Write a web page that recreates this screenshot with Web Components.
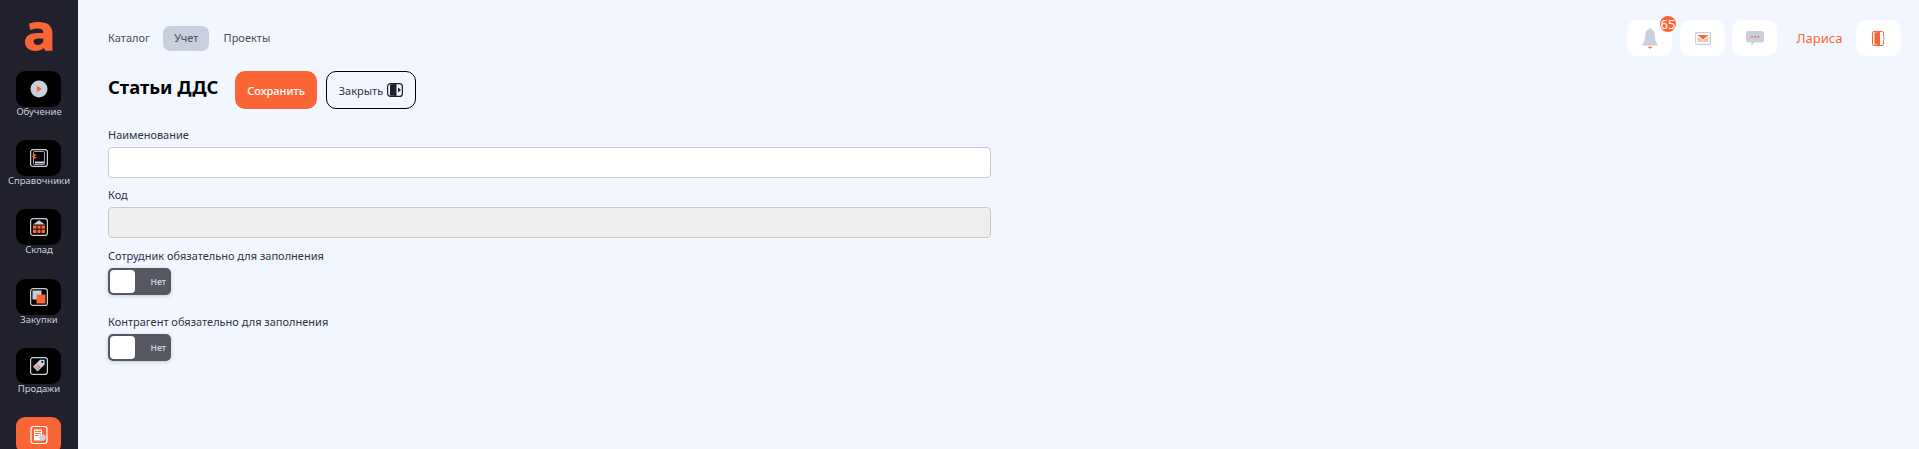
<!DOCTYPE html>
<html lang="ru">
<head>
<meta charset="utf-8">
<title>Статьи ДДС</title>
<style>
  html, body { margin: 0; height: 100%; overflow: hidden; }
  body { font-family: "Noto Sans", sans-serif; background: #f2f7ff; color: #33333f; }
</style>
</head>
<body>
<app-shell>
  <side-bar slot="side">
    <side-item label="Обучение"><svg viewBox="0 0 20 20" width="20" height="20"><circle cx="10" cy="10" r="8.500" fill="#c9cfdd"/><path d="M7.800 6.800 13 10 7.800 13.200z" fill="#fb6535"/></svg></side-item>
    <side-item label="Справочники"><svg viewBox="0 0 20 20" width="20" height="20" fill="none"><rect x="1.600" y="1.600" width="16.800" height="16.800" rx="2.500" stroke="#c9cfdd" stroke-width="1.200"/><rect x="4.500" y="3.500" width="11" height="13" rx="1" stroke="#c9cfdd" stroke-width=".8"/><path d="M6 14.500h9" stroke="#c9cfdd" stroke-width="2"/><path d="M3.800 6 6.500 7 3.800 8.500 6.500 9.500 3.800 11" stroke="#fb6535" stroke-width="1.200"/></svg></side-item>
    <side-item label="Склад"><svg viewBox="0 0 20 20" width="20" height="20" fill="none"><rect x="1.600" y="1.600" width="16.800" height="16.800" rx="2.500" stroke="#c9cfdd" stroke-width="1.200"/><path d="M10 3.200 16 7.500H4z" fill="#c9cfdd"/><path d="M4 8.500h12v7.500H4z" fill="#fb6535"/><path d="M8 8.500v7.500M12 8.500v7.500M4 12.200h12" stroke="#000" stroke-width=".9"/></svg></side-item>
    <side-item label="Закупки"><svg viewBox="0 0 20 20" width="20" height="20" fill="none"><rect x="1.600" y="1.600" width="16.800" height="16.800" rx="2.500" stroke="#c9cfdd" stroke-width="1.200"/><rect x="3.500" y="3.500" width="9" height="9" fill="#c9cfdd"/><rect x="7.500" y="7.500" width="9" height="9" fill="#fb6535"/></svg></side-item>
    <side-item label="Продажи"><svg viewBox="0 0 20 20" width="20" height="20" fill="none"><rect x="1.600" y="1.600" width="16.800" height="16.800" rx="2.500" stroke="#c9cfdd" stroke-width="1.200"/><path d="M11 3.800h4.600v4.600l-7 7-4.600-4.600z" fill="#c9cfdd"/><circle cx="13.300" cy="6.100" r="1" fill="#000"/><path d="M6.500 10.600 9.600 13.700M8.200 8.900 11.300 12" stroke="#fb6535" stroke-width="1.100"/></svg></side-item>
    <side-item active><svg viewBox="0 0 20 20" width="20" height="20" fill="none"><rect x="2" y="1.500" width="16" height="17" rx="2.500" stroke="#fff" stroke-width="1.200"/><path d="M5 4.500h8v11H5z" fill="#fff"/><path d="M6 6.500h6M6 8.500h6M6 10.500h4" stroke="#fb6535" stroke-width=".9"/><circle cx="13.500" cy="12.500" r="3.200" fill="#c9cfdd"/></svg></side-item>
  </side-bar>
  <top-bar slot="top"></top-bar>
  <dds-form slot="main"></dds-form>
</app-shell>

<script>
class AppShell extends HTMLElement {
  connectedCallback() {
    this.attachShadow({ mode: 'open' });
    this.shadowRoot.innerHTML = `
      <style>
        :host { display: flex; height: 449px; overflow: hidden; }
        .side { flex: 0 0 78px; }
        .content { flex: 1; min-width: 0; }
      </style>
      <div class="side"><slot name="side"></slot></div>
      <div class="content">
        <slot name="top"></slot>
        <slot name="main"></slot>
      </div>
    `;
  }
}
customElements.define('app-shell', AppShell);

class SideBar extends HTMLElement {
  connectedCallback() {
    this.attachShadow({ mode: 'open' });
    this.shadowRoot.innerHTML = `
      <style>
        :host { display: block; width: 78px; height: 449px; background: #20212c; overflow: hidden; }
        .logo { box-sizing: border-box; height: 71px; padding: 22px 0 0 25px; }
        .logo svg { display: block; }
      </style>
      <div class="logo">
        <svg width="28" height="29" viewBox="0 0 28 29"><path fill="#fb6535" fill-rule="evenodd" d="M4 1.600C6.800.5 9.800 0 13.500 0 22.500 0 27.400 3.800 27.400 11.500V28.800H20.200L18.800 25.800C16.600 27.900 13.900 29 10.500 29 4.200 29 0 25.500 0 20 0 14 4.700 10.900 12.700 10.900H18.300V10.500C18.300 7.800 16.300 6.500 12.800 6.500 10.200 6.500 7.600 7 5.200 8.100ZM18.300 16.500H13.200C10.500 16.500 8.500 17.500 8.500 19.400 8.500 21.400 10.400 23 12.700 23 15.800 23 18.300 20.700 18.300 18.500Z"/></svg>
      </div>
      <slot></slot>
    `;
  }
}
customElements.define('side-bar', SideBar);

class SideItem extends HTMLElement {
  connectedCallback() {
    this.attachShadow({ mode: 'open' });
    const active = this.hasAttribute('active');
    this.shadowRoot.innerHTML = `
      <style>
        :host { display: block; position: relative; height: 69.200px; }
        .tile { width: 45px; height: 36px; margin-left: 16px; border-radius: 9px; background: ${active ? '#fb6535' : '#000'};
          display: flex; align-items: center; justify-content: center; }
        .label { text-align: center; font-size: 9.500px; line-height: 10px; color: #c9cfdd; white-space: nowrap; }
        .mark { position: absolute; left: 78px; top: 2px; width: 3px; height: 60px; background: #fb6535; }
      </style>
      <div class="tile"><slot></slot></div>
      ${active ? '<div class="mark"></div>' : `<div class="label">${this.getAttribute('label')}</div>`}
    `;
  }
}
customElements.define('side-item', SideItem);

class TopBar extends HTMLElement {
  connectedCallback() {
    this.attachShadow({ mode: 'open' });
    this.shadowRoot.innerHTML = `
      <style>
        :host { display: flex; justify-content: space-between; align-items: flex-start; height: 71px; box-sizing: border-box; padding: 20px 18px 0 30px; }
        nav { display: flex; align-items: center; gap: 13.500px; height: 36px; font-size: 11px; color: #4b4c57; }
        nav a { display: block; height: 25px; line-height: 23px; }
        nav a.on { background: #c9cfdd; padding: 0 11px; border-radius: 7px; margin-right: .7px; }
        .tools { display: flex; align-items: center; }
        .tool { position: relative; width: 45px; height: 36px; border-radius: 10px; background: #fff; display: flex; align-items: center; justify-content: center; }
        .bell { margin-right: 8px; }
        .mail { margin-right: 7px; }
        .badge { position: absolute; left: 33px; top: -4px; width: 16px; height: 16px; border-radius: 50%; background: #fb6535; color: #fff;
          font-size: 13px; line-height: 16px; text-align: center; white-space: nowrap; overflow: hidden; }
        .user { box-sizing: border-box; width: 79px; padding-left: 6px; text-align: center; font-size: 13px; color: #fb6535; }
      </style>
      <nav><a>Каталог</a><a class="on">Учет</a><a>Проекты</a></nav>
      <div class="tools">
        <div class="tool bell">
          <svg width="16" height="22" viewBox="0 0 18 22" preserveAspectRatio="none"><path fill="#c9cfdd" d="M7.500 2.500A1.500 1.500 0 0 1 10.500 2.500C13.500 3.400 14.400 6 14.500 9.500 14.600 13 15.500 15 17.500 17.500V18.500H.500V17.500C2.500 15 3.400 13 3.500 9.500 3.600 6 4.500 3.400 7.500 2.500Z"/><path fill="#fb6535" d="M6 19.800H12L9 21.800Z"/></svg>
          <span class="badge">65</span>
        </div>
        <div class="tool mail">
          <svg width="16" height="13" viewBox="0 0 16 13" fill="none"><rect x=".6" y=".6" width="14.800" height="11.800" rx="1" stroke="#c9cfdd" stroke-width="1.200"/><path d="M2.500 3H13.500L8 7.500Z" fill="#fb6535"/><path d="M2.500 4.500 8 8.500 13.500 4.500V10H2.500Z" fill="#f7c3ae"/></svg>
        </div>
        <div class="tool">
          <svg width="18" height="15" viewBox="0 0 18 15"><path fill="#c9cfdd" d="M2.500 0H15.500A2.500 2.500 0 0 1 18 2.500V9A2.500 2.500 0 0 1 15.500 11.500H8L5.500 14.500V11.500H2.500A2.500 2.500 0 0 1 0 9V2.500A2.500 2.500 0 0 1 2.500 0Z"/><circle cx="6" cy="5.800" r=".9" fill="#fb6535"/><circle cx="9" cy="5.800" r=".9" fill="#fb6535"/><circle cx="12" cy="5.800" r=".9" fill="#fb6535"/></svg>
        </div>
        <div class="user">Лариса</div>
        <div class="tool">
          <svg width="14" height="15" viewBox="0 0 14 15" fill="none"><rect x=".5" y=".5" width="11" height="14" rx="1.500" stroke="#fb6535"/><path d="M2.500 1.500 8 .8V14L2.500 13.500Z" fill="#fb6535"/><path d="M11 5 13.800 7.500 11 10Z" fill="#c9cfdd"/></svg>
        </div>
      </div>
    `;
  }
}
customElements.define('top-bar', TopBar);

class FormField extends HTMLElement {
  connectedCallback() {
    this.attachShadow({ mode: 'open' });
    const off = this.hasAttribute('disabled');
    this.shadowRoot.innerHTML = `
      <style>
        :host { display: block; width: 883px; }
        .label { font-size: 11px; line-height: 15px; color: #33333f; margin-bottom: 5px; }
        .box { box-sizing: border-box; height: 31px; border: 1px solid #c8c8c8; border-radius: 4px; background: ${off ? '#eeeeee' : '#fff'}; }
      </style>
      <div class="label">${this.getAttribute('label')}</div>
      <div class="box"></div>
    `;
  }
}
customElements.define('form-field', FormField);

class ToggleField extends HTMLElement {
  connectedCallback() {
    this.attachShadow({ mode: 'open' });
    this.shadowRoot.innerHTML = `
      <style>
        :host { display: block; }
        .label { font-size: 11px; line-height: 15px; color: #33333f; margin-bottom: 5px; }
        .track { box-sizing: border-box; width: 63px; height: 27px; padding: 2px; border-radius: 5px; background: #565761;
          display: flex; align-items: center; justify-content: space-between; box-shadow: 0 1px 4px rgba(0,0,0,.18); }
        .knob { width: 25px; height: 23px; border-radius: 4px; background: #fff; }
        .txt { font-size: 8.500px; font-weight: 600; color: #c9cfdd; margin-right: 3px; }
      </style>
      <div class="label">${this.getAttribute('label')}</div>
      <div class="track"><div class="knob"></div><span class="txt">Нет</span></div>
    `;
  }
}
customElements.define('toggle-field', ToggleField);

class DdsForm extends HTMLElement {
  connectedCallback() {
    this.attachShadow({ mode: 'open' });
    this.shadowRoot.innerHTML = `
      <style>
        :host { display: block; padding-left: 30px; }
        .head { display: flex; align-items: flex-start; height: 56px; }
        h1 { margin: 0 17px 0 0; font-size: 18.400px; line-height: 32px; font-weight: 700; color: #000; width: 110px; white-space: nowrap; }
        button { box-sizing: border-box; height: 38px; border-radius: 10px; font: 11px "Noto Sans", sans-serif; padding: 0; cursor: pointer; }
        .save { width: 82px; margin-right: 9px; background: #fb6535; color: #fff; border: 0; font-weight: 500; }
        .close { width: 90px; background: transparent; border: 1px solid #000; color: #33333f; display: flex; align-items: center; justify-content: center; gap: 4px; }
        .rows { display: flex; flex-direction: column; }
        form-field + form-field { margin-top: 9px; }
        toggle-field { margin-top: 10px; }
        toggle-field + toggle-field { margin-top: 19px; }
      </style>
      <div class="head">
        <h1>Статьи ДДС</h1>
        <button class="save">Сохранить</button>
        <button class="close">Закрыть
          <svg width="16" height="14" viewBox="0 0 16 14" fill="none"><rect x=".6" y=".6" width="14.800" height="12.800" rx="3" stroke="#20212c" stroke-width="1.200"/><path d="M3 1.500 9.500 .8V13L3 12.500Z" fill="#20212c"/><path d="M11 4.500 14 7 11 9.500Z" fill="#20212c"/></svg>
        </button>
      </div>
      <div class="rows">
        <form-field label="Наименование"></form-field>
        <form-field label="Код" disabled></form-field>
        <toggle-field label="Сотрудник обязательно для заполнения"></toggle-field>
        <toggle-field label="Контрагент обязательно для заполнения"></toggle-field>
      </div>
    `;
  }
}
customElements.define('dds-form', DdsForm);
</script>
</body>
</html>
